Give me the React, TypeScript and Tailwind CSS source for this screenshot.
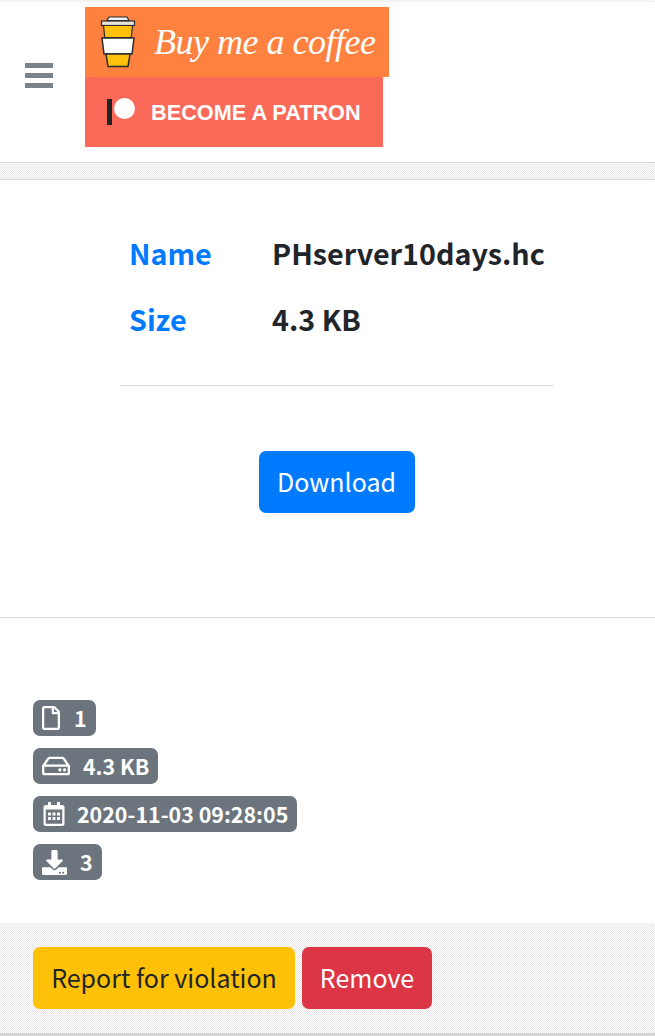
import { FaDownload, FaRegCalendarAlt, FaRegFile, FaRegHdd } from "react-icons/fa";
import type { ReactNode } from "react";

const dither =
  "bg-[#fbfbfb] bg-[repeating-conic-gradient(#e8e8e8_0_25%,#fdfdfd_0_50%)] bg-[length:2px_2px]";

function CoffeeCup() {
  return (
    <svg width="36" height="52" viewBox="0 0 36 52" className="shrink-0">
      <path d="M7 4.500 9 1h18l2 3.500z" fill="#f2f2f2" stroke="#2b2b2b" strokeWidth="1.2" />
      <rect x="1.500" y="5" width="33" height="4.500" fill="#e8e4d8" stroke="#2b2b2b" strokeWidth="1.2" />
      <path d="M3.500 9.500h29l-1.200 12H4.700z" fill="#ffc00e" stroke="#2b2b2b" strokeWidth="1.2" />
      <path d="M2 22h32l-2 16H4z" fill="#ffffff" stroke="#2b2b2b" strokeWidth="1.500" />
      <path d="M6 38h24l-2 12.500H8z" fill="#ffc00e" stroke="#2b2b2b" strokeWidth="1.500" />
    </svg>
  );
}

function Badge({ icon, text, gap }: { icon: ReactNode; text: string; gap: string }) {
  return (
    <div className={`flex h-9 w-fit items-center rounded-[7px] bg-[#6c757d] pl-[9px] pr-[9px] text-[21.400px] font-bold leading-none text-white ${gap}`}>
      {icon}
      <span>{text}</span>
    </div>
  );
}

export default function App() {
  return (
    <div className="h-[1036px] overflow-hidden bg-white font-['Noto_Sans_CJK_JP',sans-serif] text-[#212529]">
      <div className={`h-0.5 ${dither}`} />

      <nav className="flex h-[161px] items-start border-b border-[#d8d8d8] bg-white pl-[25px] pt-[5px]">
        <div className="mt-[56px] flex w-[28px] flex-col gap-[5px]">
          <div className="h-[5px] bg-[#7b8288]" />
          <div className="h-[5px] bg-[#7b8288]" />
          <div className="h-[5px] bg-[#7b8288]" />
        </div>
        <div className="ml-[32px] flex flex-col items-start">
          <div className="flex h-[70px] w-[304px] items-center bg-[#ff813f] pl-[15px]">
            <CoffeeCup />
            <span className="ml-[18px] whitespace-nowrap font-['Liberation_Serif',serif] text-[36px] italic leading-none tracking-[-0.5px] text-white">
              Buy me a coffee
            </span>
          </div>
          <div className="flex h-[70px] w-[298px] items-center bg-[#fb6a58] pl-[22px]">
            <div className="relative h-[26px] w-[28px]">
              <div className="absolute left-0 top-0 h-[26px] w-[5px] bg-[#232323]" />
              <div className="absolute left-[7px] top-[-1px] h-[21px] w-[21px] rounded-full bg-white" />
            </div>
            <span className="ml-[16px] mt-0.5 whitespace-nowrap font-['Liberation_Sans',sans-serif] text-[21.700px] font-bold leading-none text-white">
              BECOME A PATRON
            </span>
          </div>
        </div>
      </nav>

      <div className={`h-4 ${dither}`} />

      <main className="h-[439px] border-y border-[#d8d8d8] bg-white pt-[52px]">
        <div className="ml-[120px] w-[433px]">
          <div className="border-b border-[#d8d8d8] pb-[45px]">
            <div className="grid grid-cols-[143px_1fr] gap-y-[24px] pl-[9px] text-[28.700px] font-bold leading-[42px]">
              <span className="text-[#007bff]">Name</span>
              <span>PHserver10days.hc</span>
              <span className="text-[#007bff]">Size</span>
              <span>4.3 KB</span>
            </div>
          </div>
          <div className="mt-[65px] flex justify-center">
            <button className="h-[62px] w-[156px] rounded-[7px] bg-[#007bff] text-[25px] text-white">
              Download
            </button>
          </div>
        </div>
      </main>

      <section className="flex h-[305px] flex-col gap-3 bg-white pl-[33px] pt-[82px]">
        <Badge gap="gap-[14px]" icon={<FaRegFile className="h-6 w-[18px]" />} text="1" />
        <Badge gap="gap-[13px]" icon={<FaRegHdd size={28} />} text="4.3 KB" />
        <Badge gap="gap-[11px]" icon={<FaRegCalendarAlt size={24} />} text="2020-11-03 09:28:05" />
        <Badge gap="gap-[13px]" icon={<FaDownload size={25} />} text="3" />
      </section>

      <footer className={`flex h-[113px] gap-[7px] border-b-[3px] border-[#d4d4d4] pl-[33px] pt-6 ${dither}`}>
        <button className="h-[62px] w-[262px] rounded-[7px] bg-[#ffc107] text-[25px]">
          Report for violation
        </button>
        <button className="h-[62px] w-[130px] rounded-[7px] bg-[#dc3545] text-[25px] text-white">
          Remove
        </button>
      </footer>
    </div>
  );
}
